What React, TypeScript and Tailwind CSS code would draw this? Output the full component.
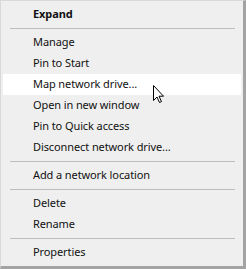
import React from 'react';

type Entry = { label?: string; bold?: boolean; hover?: boolean; sep?: boolean };

const entries: Entry[] = [
  { label: 'Expand', bold: true },
  { sep: true },
  { label: 'Manage' },
  { label: 'Pin to Start' },
  { label: 'Map network drive...', hover: true },
  { label: 'Open in new window' },
  { label: 'Pin to Quick access' },
  { label: 'Disconnect network drive...' },
  { sep: true },
  { label: 'Add a network location' },
  { sep: true },
  { label: 'Delete' },
  { label: 'Rename' },
  { sep: true },
  { label: 'Properties' },
];

const Cursor = () => (
  <svg width="13" height="20" viewBox="0 0 13 20" className="absolute left-[151px] top-[83px]">
    <path
      d="M1.5 1.5 L1.5 16.5 L5 13 L7.5 18.5 L9.5 17.6 L7 12.2 L11.5 12.2 Z"
      fill="#ffffff"
      stroke="#000000"
      strokeWidth="1"
      strokeLinejoin="miter"
    />
  </svg>
);

export default function App() {
  return (
    <div className="w-[246px] h-[269px] bg-white">
      <div
        className="relative w-[246px] h-[269px] bg-[#efefef] border-l border-t border-[#d9d9d9] border-r-[3px] border-b-[3px] border-r-[#a3a3a3] border-b-[#a3a3a3] pt-[3px] pb-[3px] text-[11px] tracking-[-0.1px] text-[#111]"
        style={{ fontFamily: '"Noto Sans", "Open Sans", sans-serif' }}
      >
        {entries.map((e, i) =>
          e.sep ? (
            <div key={i} className="h-[7px] flex items-center pl-[9px] pr-[8px]">
              <div className="w-full h-px bg-[#bdbdbd]" />
            </div>
          ) : (
            <div
              key={i}
              className={`h-[21px] mx-[2px] flex items-center pl-[30px] ${e.hover ? 'bg-white' : ''} ${e.bold ? 'font-bold' : ''}`}
            >
              {e.label}
            </div>
          )
        )}
        <Cursor />
      </div>
    </div>
  );
}
